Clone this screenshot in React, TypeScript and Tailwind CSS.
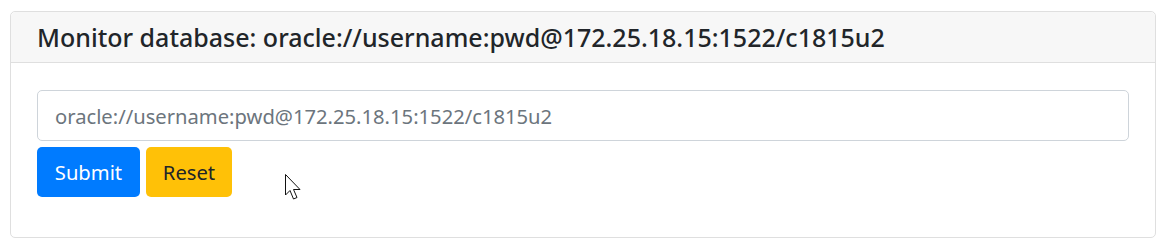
import React from 'react';

// Bootstrap-like card: database monitor form
export default function App() {
    const dsn = 'oracle://username:pwd@172.25.18.15:1522/c1815u2';

    return (
        <div
            className="relative w-[1172px] h-[249px] bg-white pt-[11px] pl-[10px] pr-[16px]"
            style={{ fontFamily: '"Noto Sans", "Open Sans", sans-serif' }}
        >
            <div className="h-[227px] rounded-[5px] border border-[#dfdfdf] bg-white">
                <div className="h-[51px] flex items-center px-[26px] bg-[#f7f7f7] border-b border-[#dfdfdf] rounded-t-[5px]">
                    <h4 className="text-[25px] font-medium text-[#212529] leading-none">
                        Monitor database: {dsn}
                    </h4>
                </div>

                <div className="px-[26px] pt-[27px]">
                    <input
                        type="text"
                        placeholder={dsn}
                        className="block w-full h-[51px] px-[17px] rounded-[5px] border border-[#ced4da] text-[20.2px] text-[#495057] placeholder:text-[#6c757d] outline-none"
                    />
                    <div className="flex gap-[6px] mt-[6px]">
                        <button className="h-[50px] w-[103px] rounded-[5px] bg-[#007bff] text-white text-[20.2px]">
                            Submit
                        </button>
                        <button className="h-[50px] w-[86px] rounded-[5px] bg-[#ffc107] text-[#212529] text-[20.2px]">
                            Reset
                        </button>
                    </div>
                </div>
            </div>

            {/* mouse pointer */}
            <svg
                className="absolute left-[285px] top-[174px]"
                width="19"
                height="28"
                viewBox="0 0 19 28"
            >
                <path
                    d="M0.5 0.5 L0.5 21 L5 16.5 L8.5 25 L12 23.5 L8.5 15.5 L15 15.5 Z"
                    fill="white"
                    stroke="#111"
                    strokeWidth="1"
                    strokeLinejoin="miter"
                />
            </svg>
        </div>
    );
}
